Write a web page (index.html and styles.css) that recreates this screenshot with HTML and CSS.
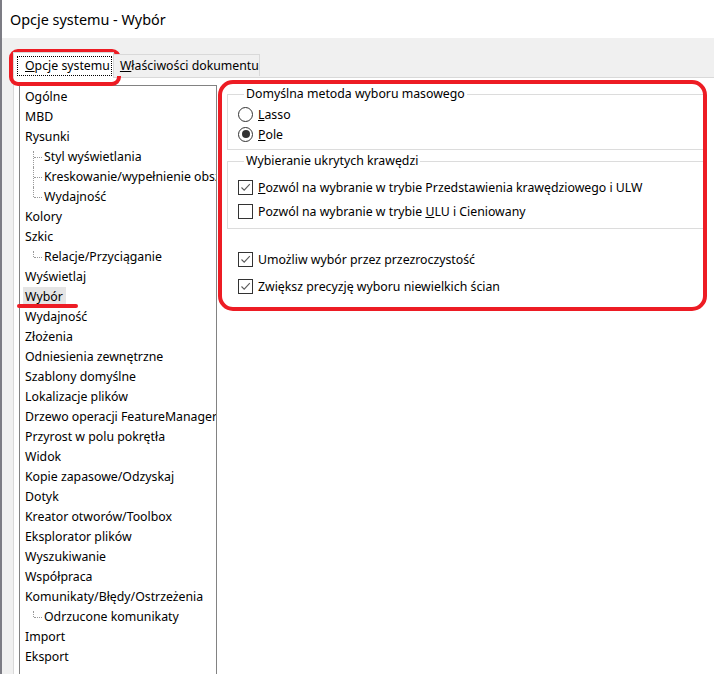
FILE: index.html
```html
<!DOCTYPE html>
<html lang="pl">
<head>
<meta charset="utf-8">
<title>Opcje systemu - Wybór</title>
<link rel="stylesheet" href="styles.css">
</head>
<body>
<div class="window">
  <div class="titlebar">Opcje systemu - Wybór</div>
  <div class="dialog">
    <div class="tabs">
      <div class="tab active"><span class="focus"><u>O</u>pcje systemu</span></div>
      <div class="tab"><u>W</u>łaściwości dokumentu</div>
    </div>
    <div class="page">
      <div class="tree">
        <div class="item">Ogólne</div>
        <div class="item">MBD</div>
        <div class="item">Rysunki</div>
        <div class="item child first mid">Styl wyświetlania</div>
        <div class="item child mid">Kreskowanie/wypełnienie obszaru</div>
        <div class="item child">Wydajność</div>
        <div class="item">Kolory</div>
        <div class="item">Szkic</div>
        <div class="item child first">Relacje/Przyciąganie</div>
        <div class="item">Wyświetlaj</div>
        <div class="item"><span class="selected">Wybór</span></div>
        <div class="item">Wydajność</div>
        <div class="item">Złożenia</div>
        <div class="item">Odniesienia zewnętrzne</div>
        <div class="item">Szablony domyślne</div>
        <div class="item">Lokalizacje plików</div>
        <div class="item">Drzewo operacji FeatureManager</div>
        <div class="item">Przyrost w polu pokrętła</div>
        <div class="item">Widok</div>
        <div class="item">Kopie zapasowe/Odzyskaj</div>
        <div class="item">Dotyk</div>
        <div class="item">Kreator otworów/Toolbox</div>
        <div class="item">Eksplorator plików</div>
        <div class="item">Wyszukiwanie</div>
        <div class="item">Współpraca</div>
        <div class="item">Komunikaty/Błędy/Ostrzeżenia</div>
        <div class="item child first">Odrzucone komunikaty</div>
        <div class="item">Import</div>
        <div class="item">Eksport</div>
      </div>
      <div class="options">
        <fieldset class="group group-first">
          <legend>Domyślna metoda wyboru masowego</legend>
          <div class="row radio-row"><span class="radio"></span><span><u>L</u>asso</span></div>
          <div class="row radio-row"><span class="radio on"></span><span><u>P</u>ole</span></div>
        </fieldset>
        <fieldset class="group group-second">
          <legend>Wybieranie ukrytych krawędzi</legend>
          <div class="row check-row"><span class="check on"><svg viewBox="0 0 13 13" width="13" height="13"><path d="M2.5 6.5 L5.2 9.2 L10.8 3.2" fill="none" stroke="#5a5a5a" stroke-width="1.1"/></svg></span><span><u>P</u>ozwól na wybranie w trybie Przedstawienia krawędziowego i ULW</span></div>
          <div class="row check-row"><span class="check"></span><span>Pozwól na wybranie w trybie <u>U</u>LU i Cieniowany</span></div>
        </fieldset>
        <div class="loose">
          <div class="row check-row"><span class="check on"><svg viewBox="0 0 13 13" width="13" height="13"><path d="M2.5 6.5 L5.2 9.2 L10.8 3.2" fill="none" stroke="#5a5a5a" stroke-width="1.1"/></svg></span><span>Umożliw wybór przez przezroczystość</span></div>
          <div class="row check-row"><span class="check on"><svg viewBox="0 0 13 13" width="13" height="13"><path d="M2.5 6.5 L5.2 9.2 L10.8 3.2" fill="none" stroke="#5a5a5a" stroke-width="1.1"/></svg></span><span>Zwiększ precyzję wyboru niewielkich ścian</span></div>
        </div>
      </div>
    </div>
  </div>
  <div class="mark mark-tab"></div>
  <div class="mark mark-panel"></div>
  <div class="mark-line"></div>
</div>
</body>
</html>
```
FILE: styles.css
```css
* { box-sizing: border-box; }
html, body { margin: 0; padding: 0; background: #ffffff; }
body { font-family: "Noto Sans", "Open Sans", sans-serif; font-size: 12.3px; color: #000; }

.window {
  position: relative;
  width: 714px;
  height: 674px;
  overflow: hidden;
  display: flex;
  flex-direction: column;
  border-left: 2px solid #7c7c84;
}

.titlebar {
  height: 38px;
  background: #ffffff;
  padding-left: 8px;
  font-size: 14.4px;
  line-height: 40px;
  color: #000;
}

.dialog {
  flex: 1;
  background: #f0f0f0;
  padding-left: 11px;
  display: flex;
  flex-direction: column;
}

.tabs {
  height: 39px;
  display: flex;
  align-items: flex-end;
  position: relative;
  z-index: 1;
}
.tab {
  height: 22px;
  margin-bottom: 1px;
  border: 1px solid #d9d9d9;
  border-bottom: none;
  border-left: none;
  background: #f0f0f0;
  padding: 0 0 0 6px;
  line-height: 21px;
  white-space: nowrap;
}
.tab.active {
  height: 26px;
  margin-bottom: -1px;
  background: #ffffff;
  border-left: 1px solid #d9d9d9;
  padding: 3px 1px 0 3px;
  line-height: 18px;
}
.focus {
  display: inline-block;
  border: 1px dotted #000;
  padding: 0 1px 0 7px;
  height: 20px;
  line-height: 18px;
}

.page {
  flex: 1;
  background: #ffffff;
  border-top: 1px solid #d9d9d9;
  border-left: 1px solid #d9d9d9;
  display: flex;
  align-items: flex-start;
  padding: 7px 0 0 5px;
}

.tree {
  width: 198px;
  height: 620px;
  flex: none;
  border: 1px solid #828282;
  padding: 1px 0 0 0;
  overflow: hidden;
}
.item {
  position: relative;
  height: 20px;
  line-height: 20px;
  padding-left: 5px;
  white-space: nowrap;
}
.item.child { padding-left: 24px; }
.item.child::before {
  content: "";
  position: absolute;
  left: 13px;
  top: 0;
  height: 10px;
  border-left: 1px dotted #9a9a9a;
}
.item.child.first::before { top: 4px; height: 6px; }
.item.child.mid::before { height: 20px; }
.item.child.first.mid::before { height: 16px; }
.item.child::after {
  content: "";
  position: absolute;
  left: 14px;
  top: 10px;
  width: 8px;
  border-top: 1px dotted #9a9a9a;
}
.selected {
  display: inline-block;
  background: #e5e5e5;
  margin-left: -2px;
  padding: 0 3px 0 2px;
  height: 20px;
}

.options {
  flex: 1;
  padding: 1px 10px 0 10px;
}
.group {
  margin: 0;
  border: 1px solid #dcdcdc;
  padding: 2px 0 5px 10px;
  min-width: 0;
}
.group legend {
  margin-left: 6px;
  padding: 0 2px;
  line-height: 16px;
  height: 16px;
}
.group-second {
  margin-top: 3px;
  padding-top: 6px;
  padding-bottom: 5px;
}
.row {
  display: flex;
  align-items: center;
  gap: 5px;
  white-space: nowrap;
}
.radio-row { height: 20px; }
.check-row { height: 24px; }
.radio {
  width: 15px;
  height: 15px;
  border: 1px solid #333333;
  border-radius: 50%;
  background: #fff;
  display: flex;
  align-items: center;
  justify-content: center;
  flex: none;
}
.radio.on::after {
  content: "";
  width: 8px;
  height: 8px;
  border-radius: 50%;
  background: #333333;
}
.check {
  width: 15px;
  height: 15px;
  border: 1px solid #333333;
  background: #fff;
  flex: none;
  display: flex;
  align-items: center;
  justify-content: center;
}
.check svg { display: block; }
.loose {
  padding-left: 11px;
  margin-top: 18px;
  display: flex;
  flex-direction: column;
  gap: 3px;
}

.mark {
  position: absolute;
  border: 4px solid #ed1c24;
  pointer-events: none;
}
.mark-tab {
  left: 7px;
  top: 49px;
  width: 112px;
  height: 37px;
  border-radius: 9px;
}
.mark-panel {
  left: 216px;
  top: 80px;
  width: 489px;
  height: 231px;
  border-radius: 15px;
}
.mark-line {
  position: absolute;
  left: 15px;
  top: 304px;
  width: 61px;
  height: 4px;
  border-radius: 2px;
  background: #ed1c24;
}
```
